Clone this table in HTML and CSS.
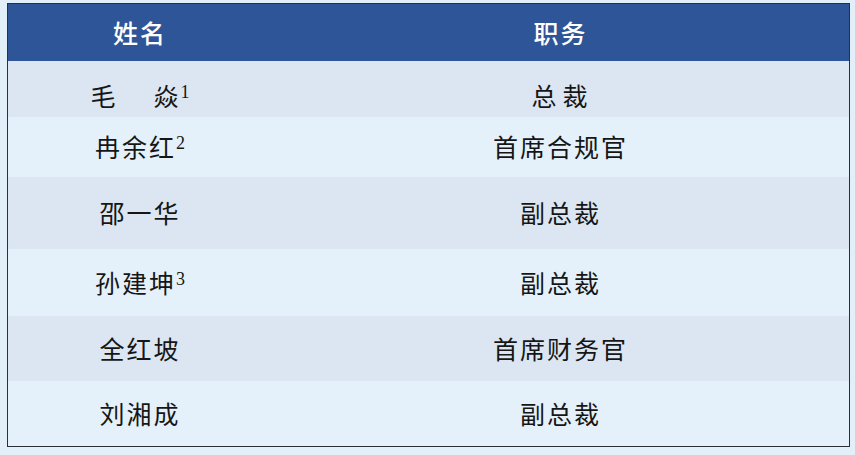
FILE: index.html
```html
<!DOCTYPE html>
<html lang="zh-CN">
<head>
<meta charset="utf-8">
<link rel="stylesheet" href="styles.css">
</head>
<body>
<table class="roster">
  <thead>
    <tr class="head"><th class="c-name">姓名</th><th class="c-title">职务</th></tr>
  </thead>
  <tbody>
    <tr class="r1 odd"><td><span class="gap">毛</span>焱<sup>1</sup></td><td>总<span class="sp"></span>裁</td></tr>
    <tr class="r2 even"><td>冉余红<sup>2</sup></td><td>首席合规官</td></tr>
    <tr class="r3 odd"><td>邵一华</td><td>副总裁</td></tr>
    <tr class="r4 even"><td>孙建坤<sup>3</sup></td><td>副总裁</td></tr>
    <tr class="r5 odd"><td>全红坡</td><td>首席财务官</td></tr>
    <tr class="r6 even"><td>刘湘成</td><td>副总裁</td></tr>
  </tbody>
</table>
</body>
</html>
```

FILE: styles.css
```css
html, body {
  margin: 0;
  padding: 0;
  background: #e3eff8;
}
body {
  padding: 3px 0 0 7px;
  font-family: "Noto Sans CJK SC", "Noto Sans", sans-serif;
}
.roster {
  border-collapse: collapse;
  width: 843px;
  border: 1.5px solid #2b2f36;
  table-layout: fixed;
}
.roster th, .roster td {
  padding: 0;
  text-align: center;
  vertical-align: middle;
  font-size: 25px;
  letter-spacing: 2px;
  line-height: 1;
  white-space: nowrap;
}
.c-name { width: 264px; }
.head { height: 57px; background: #2e5597; }
.head th { color: #ffffff; font-weight: 500; }
.roster td { color: #161616; font-weight: 400; }
.odd { background: #dce6f2; }
.even { background: #e5f1fa; }
.r1 { height: 56px; }
.r1 td { padding-top: 14px; }
.r2 { height: 60px; }
.r3 { height: 72px; }
.r4 { height: 67px; }
.r5 { height: 65px; }
.r6 { height: 66px; }
.gap { margin-right: 36px; }
.sp { display: inline-block; width: 4px; }
sup {
  font-family: "Liberation Serif", serif;
  font-size: 18px;
  letter-spacing: 0;
  vertical-align: 8px;
  line-height: 0;
  margin-left: 0;
}
```
